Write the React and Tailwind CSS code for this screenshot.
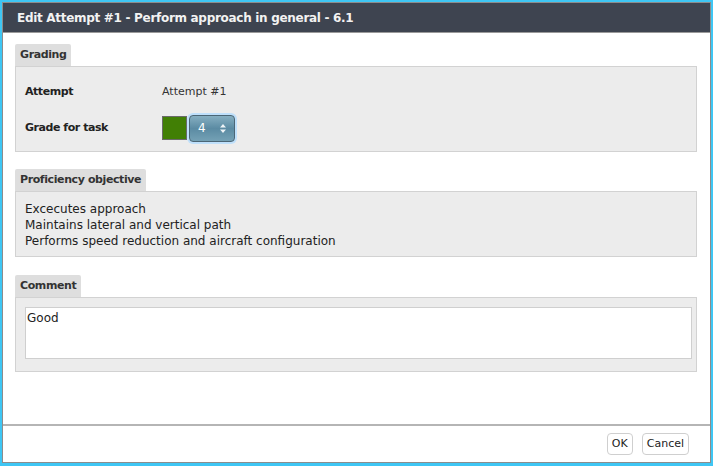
import { useState } from 'react';

function Section({ title, children, className = '' }) {
  return (
    <div className={className}>
      <div className="w-fit h-[22px] px-[5px] bg-[#dedede] rounded-t-[2px] text-[11px] font-bold tracking-[-0.4px] leading-[22px] text-[#333]">
        {title}
      </div>
      <div className="bg-[#ececec] border border-[#d2d2d2]">{children}</div>
    </div>
  );
}

export default function App() {
  const [comment, setComment] = useState('Good');

  return (
    <div className="w-[713px] h-[466px] bg-[#3ec6f4] pt-[2px] pb-[3px] px-[2px] font-['DejaVu_Sans',sans-serif]">
      <div className="h-full flex flex-col bg-white border border-[#8c8c8c]">
        <div className="h-[30px] shrink-0 bg-[#3e4450] border-b border-[#9a9a9a] px-[14px] flex items-center text-[12px] tracking-[-0.3px] font-bold text-[#f2f2f2]">
          Edit Attempt #1 - Perform approach in general - 6.1
        </div>

        <div className="flex-1 pl-[12px] pr-[13px] pt-[11px]">
          <Section title="Grading">
            <div className="pl-[9px] pt-[13px] pb-[8px] text-[11px] text-[#222]">
              <div className="flex items-center h-[24px]">
                <div className="w-[137px] font-bold tracking-[-0.45px]">Attempt</div>
                <div className="text-[#333]">Attempt #1</div>
              </div>
              <div className="flex items-center h-[30px] mt-[9px]">
                <div className="w-[137px] font-bold tracking-[-0.45px]">Grade for task</div>
                <div className="w-[25px] h-[24px] bg-[#417f05] border border-[#6a6a6a]" />
                <div className="rounded-[6px] p-[2px] bg-[#bfe0fb]">
                  <div className="relative w-[46px] h-[27px] rounded-[4px] border border-[#4b6676] bg-gradient-to-b from-[#86afc2] via-[#5b8ba3] to-[#74a1b5] text-white text-[12px] leading-[25px] pl-[8px]">
                    4
                    <svg className="absolute right-[8px] top-[8px]" width="6" height="9" viewBox="0 0 6 9">
                      <path d="M3 0 L6 3.5 L0 3.5 Z M3 9 L6 5.5 L0 5.5 Z" fill="#eef4f7" />
                    </svg>
                  </div>
                </div>
              </div>
            </div>
          </Section>

          <Section title="Proficiency objective" className="mt-[17px]">
            <div className="px-[9px] pt-[9px] pb-[7px] text-[12px] leading-[16px] text-[#222]">
              <div>Excecutes approach</div>
              <div>Maintains lateral and vertical path</div>
              <div>Performs speed reduction and aircraft configuration</div>
            </div>
          </Section>

          <Section title="Comment" className="mt-[18px]">
            <div className="pl-[9px] pr-[4px] pt-[9px] pb-[12px]">
              <textarea
                value={comment}
                onChange={(e) => setComment(e.target.value)}
                className="block w-full h-[52px] resize-none bg-white border border-[#cfcfcf] px-[1px] py-[1px] text-[12px] text-[#222] outline-none"
              />
            </div>
          </Section>
        </div>

        <div className="h-[38px] shrink-0 border-t-2 border-[#b5b5b5] flex items-center justify-end gap-[9px] pr-[21px]">
          <button className="h-[22px] px-[4px] bg-white border border-[#cfcfcf] rounded-[4px] text-[11px] text-[#222]">
            OK
          </button>
          <button className="h-[22px] px-[4px] bg-white border border-[#cfcfcf] rounded-[4px] text-[11px] text-[#222]">
            Cancel
          </button>
        </div>
      </div>
    </div>
  );
}
